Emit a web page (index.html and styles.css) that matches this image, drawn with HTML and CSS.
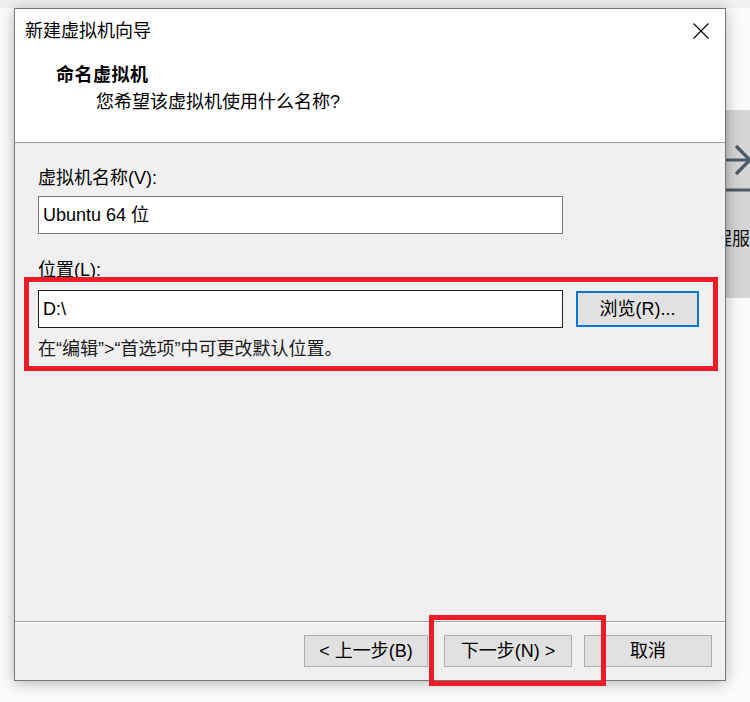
FILE: index.html
```html
<!DOCTYPE html>
<html lang="zh-CN">
<head>
<meta charset="utf-8">
<title>新建虚拟机向导</title>
<link rel="stylesheet" href="styles.css">
</head>
<body>
<div class="desktop">
  <div class="bgwin">
    <svg class="bg-icon" width="50" height="85" viewBox="0 0 50 85">
      <path d="M25 50 H49 M36 36 L50 50 L36 64" fill="none" stroke="#4b5a66" stroke-width="3.2"/>
      <path d="M25 80 H50" fill="none" stroke="#4b5a66" stroke-width="3"/>
    </svg>
    <div class="bg-text">程服</div>
  </div>
  <div class="dialog">
    <div class="titlebar">
      <span class="title">新建虚拟机向导</span>
      <svg class="close" width="16" height="16" viewBox="0 0 16 16">
        <path d="M0.5 0.5 L15.5 15.5 M15.5 0.5 L0.5 15.5" fill="none" stroke="#000" stroke-width="1.1"/>
      </svg>
    </div>
    <div class="header">
      <div class="h-title">命名虚拟机</div>
      <div class="h-sub">您希望该虚拟机使用什么名称?</div>
    </div>
    <div class="body">
      <div class="field-label">虚拟机名称(V):</div>
      <div class="input name-input">Ubuntu 64 位</div>
      <div class="field-label loc-label">位置(L):</div>
      <div class="loc-row">
        <div class="input loc-input">D:\</div>
        <div class="btn browse">浏览(R)...</div>
      </div>
      <div class="hint">在“编辑”&gt;“首选项”中可更改默认位置。</div>
    </div>
    <div class="footer">
      <div class="btn btn-back">&lt; 上一步(B)</div>
      <div class="btn btn-next">下一步(N) &gt;</div>
      <div class="btn btn-cancel">取消</div>
    </div>
  </div>
  <div class="mark mark-loc"></div>
  <div class="mark mark-next"></div>
</div>
</body>
</html>
```

FILE: styles.css
```css
html, body {
  margin: 0;
  padding: 0;
}

body {
  width: 750px;
  height: 702px;
  overflow: hidden;
  background: #fbfbfb;
  font-family: "Liberation Sans", "Noto Sans CJK SC", sans-serif;
  font-size: 18px;
  color: #000;
}

.desktop {
  position: relative;
  width: 750px;
  height: 702px;
  overflow: hidden;
  background: linear-gradient(#f0f0f0 0, #f0f0f0 8px, #fbfbfb 8px);
}

.bgwin {
  position: absolute;
  left: 700px;
  top: 110px;
  width: 50px;
  height: 188px;
  background: linear-gradient(90deg, #c9c9c9 0, #c9c9c9 26px, #d3d3d3 30px, #d6d6d6 100%);
  display: flex;
  flex-direction: column;
}

.bg-icon {
  display: block;
  flex: none;
}

.bg-text {
  margin-top: 30px;
  line-height: 24px;
  text-align: right;
  color: #111;
  font-family: "Noto Sans CJK SC", sans-serif;
}

.dialog {
  position: relative;
  z-index: 1;
  margin: 8px 0 0 14px;
  width: 712px;
  height: 673px;
  box-sizing: border-box;
  border: 1px solid #777;
  background: #f0f0f0;
  box-shadow: 0 2px 14px rgba(0, 0, 0, 0.28);
  display: flex;
  flex-direction: column;
}

.titlebar {
  height: 44px;
  flex: none;
  background: #fff;
  display: flex;
  align-items: center;
  justify-content: space-between;
  padding: 0 16px 0 10px;
}

.title {
  line-height: 24px;
}

.close {
  display: block;
}

.header {
  height: 90px;
  flex: none;
  box-sizing: border-box;
  background: #fff;
  border-bottom: 1px solid #a0a0a0;
  padding: 9px 0 0 41px;
}

.h-title {
  font-weight: bold;
  line-height: 26px;
  letter-spacing: 0.5px;
}

.h-sub {
  line-height: 28px;
  padding-left: 40px;
}

.body {
  flex: 1;
  padding: 23px 0 0 23px;
}

.field-label {
  line-height: 24px;
}

.input {
  width: 525px;
  height: 38px;
  box-sizing: border-box;
  background: #fff;
  border: 1px solid #7a7a7a;
  padding-left: 4px;
  line-height: 36px;
  white-space: nowrap;
}

.name-input {
  margin-top: 6px;
}

.loc-label {
  margin-top: 24px;
}

.loc-row {
  margin-top: 8px;
  display: flex;
  align-items: center;
  gap: 13px;
}

.loc-input {
  border-color: #1e1e1e;
}

.btn {
  box-sizing: border-box;
  background: #e1e1e1;
  border: 1px solid #adadad;
  display: flex;
  align-items: center;
  justify-content: center;
  line-height: 24px;
  white-space: nowrap;
}

.browse {
  width: 123px;
  height: 36px;
  border: 2px solid #0078d7;
}

.hint {
  margin-top: 9px;
  line-height: 24px;
  color: #1a1a1a;
}

.footer {
  height: 59px;
  flex: none;
  box-sizing: border-box;
  border-top: 1px solid #a0a0a0;
  box-shadow: inset 0 1px 0 #ffffff;
  padding: 13px 13px 0 0;
  display: flex;
  justify-content: flex-end;
  align-items: flex-start;
}

.footer .btn {
  height: 32px;
  width: 128px;
}

.footer .btn-back {
  width: 124px;
}

.footer .btn-next {
  margin-left: 16px;
}

.footer .btn-cancel {
  margin-left: 12px;
}

.mark {
  position: absolute;
  z-index: 2;
  box-sizing: border-box;
  border: 5px solid #ed1c24;
}

.mark-loc {
  left: 24px;
  top: 277px;
  width: 694px;
  height: 94px;
}

.mark-next {
  left: 429px;
  top: 615px;
  width: 177px;
  height: 71px;
}
```
